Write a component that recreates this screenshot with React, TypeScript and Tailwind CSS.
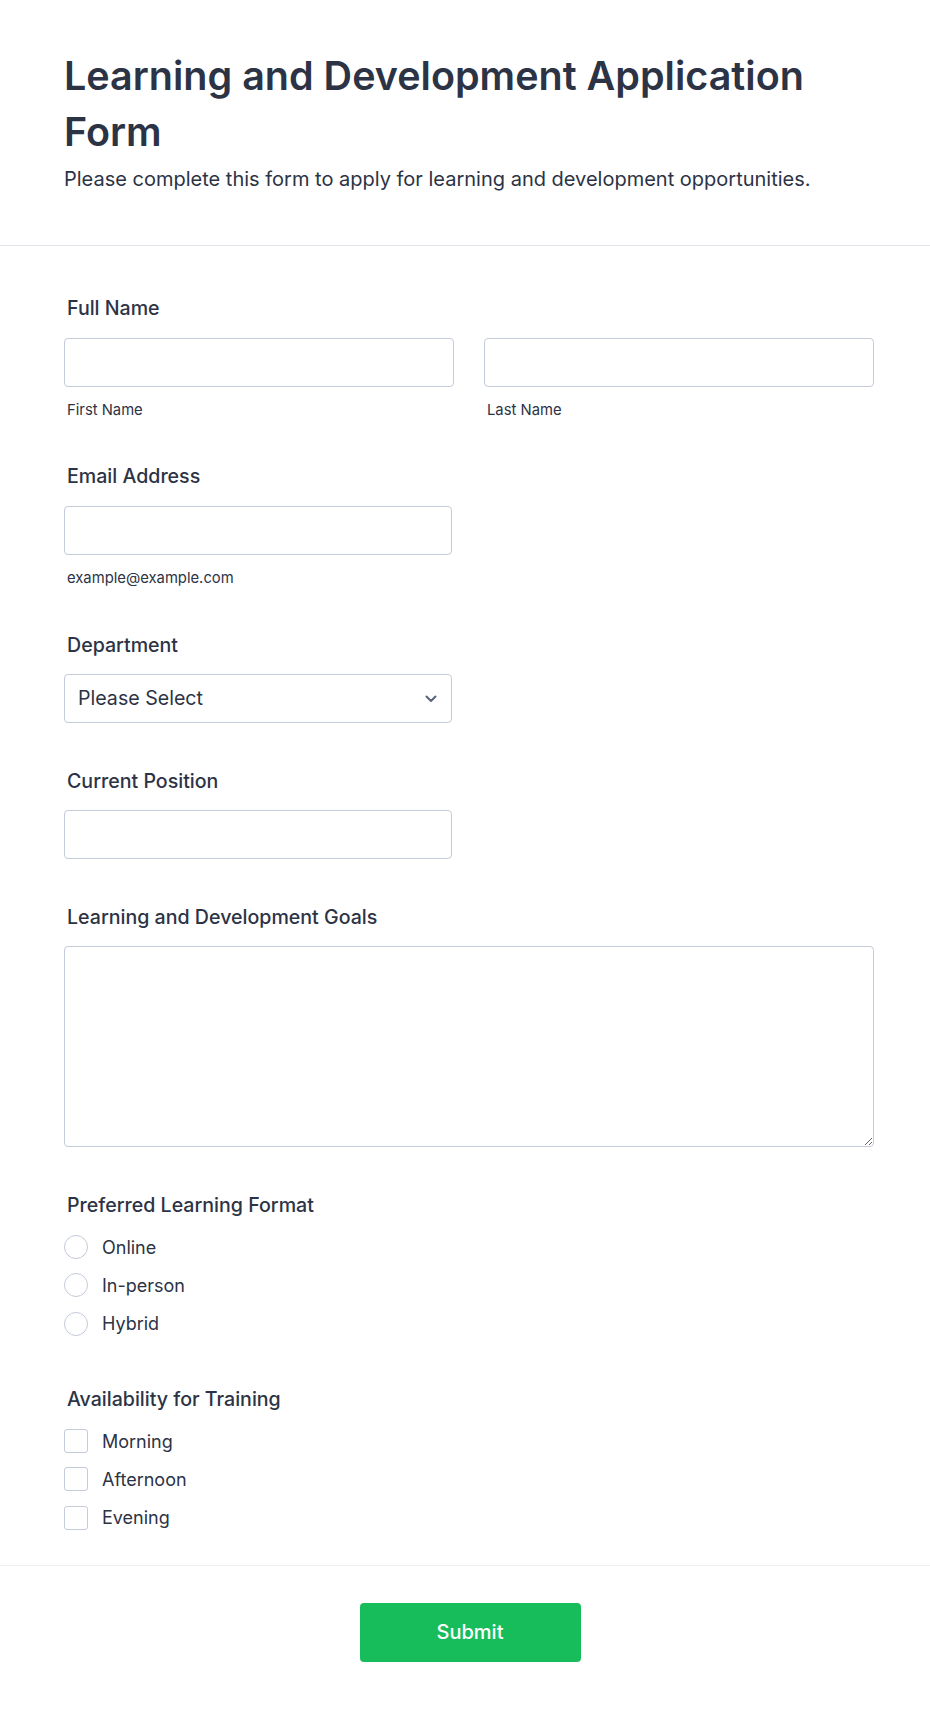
import React from 'react';

const labelCls = 'block pl-[3px] text-[19.6px] leading-[27px] font-medium text-[#2c3345]';
const inputCls =
  'block w-full h-[49px] rounded-[4px] border border-[#c3cad8] bg-white px-3 text-[18px] text-[#2c3345] outline-none';
const subCls = 'block pl-[3px] text-[14.8px] leading-[21px] text-[#2c3345]';

function Chevron() {
  return (
    <svg width="12" height="8" viewBox="0 0 12 8" fill="none" className="shrink-0">
      <path d="M1.5 1.5L6 6L10.5 1.5" stroke="#57647e" strokeWidth="2" strokeLinecap="round" strokeLinejoin="round" />
    </svg>
  );
}

function Radio({ label }: { label: string }) {
  return (
    <label className="flex items-center h-[38.3px] gap-[14px]">
      <span className="w-[24px] h-[24px] rounded-full border-[1.5px] border-[#c3cad8] bg-white" />
      <span className="text-[18px] leading-[27px] text-[#2c3345]">{label}</span>
    </label>
  );
}

function Check({ label }: { label: string }) {
  return (
    <label className="flex items-center h-[38.3px] gap-[14px]">
      <span className="w-[24px] h-[24px] rounded-[3px] border-[1.5px] border-[#c3cad8] bg-white" />
      <span className="text-[18px] leading-[27px] text-[#2c3345]">{label}</span>
    </label>
  );
}

export default function App() {
  return (
    <div className="min-h-[1713px] bg-white" style={{ fontFamily: 'Inter, "Noto Sans", sans-serif' }}>
      <header className="px-[64px] pt-[48px] pb-[52px] border-b border-[#e0e3ea]">
        <h1 className="text-[39.5px] leading-[56px] font-semibold text-[#2c3345]">
          Learning and Development Application Form
        </h1>
        <p className="mt-[5px] text-[20px] leading-[28px] text-[#2c3345]">
          Please complete this form to apply for learning and development opportunities.
        </p>
      </header>

      <form className="px-[64px] pt-[49px] pb-[28px]" onSubmit={(e) => e.preventDefault()}>
        <div>
          <span className={labelCls}>Full Name</span>
          <div className="mt-[16px] grid grid-cols-2 gap-[30px] w-[810px]">
            <div>
              <input className={inputCls} />
              <span className={`${subCls} mt-[13px]`}>First Name</span>
            </div>
            <div>
              <input className={inputCls} />
              <span className={`${subCls} mt-[13px]`}>Last Name</span>
            </div>
          </div>
        </div>

        <div className="mt-[42px] w-[388px]">
          <span className={labelCls}>Email Address</span>
          <input className={`${inputCls} mt-[16px]`} />
          <span className={`${subCls} mt-[13px]`}>example@example.com</span>
        </div>

        <div className="mt-[43px] w-[388px]">
          <span className={labelCls}>Department</span>
          <div className="mt-[15px] h-[49px] rounded-[4px] border border-[#c3cad8] flex items-center justify-between pl-[13px] pr-[14px]">
            <span className="text-[19.6px] text-[#2c3345]">Please Select</span>
            <Chevron />
          </div>
        </div>

        <div className="mt-[45px] w-[388px]">
          <span className={labelCls}>Current Position</span>
          <input className={`${inputCls} mt-[15px]`} />
        </div>

        <div className="mt-[45px] w-[810px]">
          <span className={labelCls}>Learning and Development Goals</span>
          <textarea className="mt-[15px] block w-full h-[201px] rounded-[4px] border border-[#c3cad8] bg-white p-3 text-[18px] outline-none" />
        </div>

        <div className="mt-[45px]">
          <span className={labelCls}>Preferred Learning Format</span>
          <div className="mt-[9px]">
            <Radio label="Online" />
            <Radio label="In-person" />
            <Radio label="Hybrid" />
          </div>
        </div>

        <div className="mt-[43px]">
          <span className={labelCls}>Availability for Training</span>
          <div className="mt-[9px]">
            <Check label="Morning" />
            <Check label="Afternoon" />
            <Check label="Evening" />
          </div>
        </div>
      </form>

      <div className="border-t border-[#eceef4] pt-[37px] pb-[50px] flex justify-center">
        <button className="ml-[10px] w-[221px] h-[59px] rounded-[4px] bg-[#18bd5b] text-white text-[20px] font-medium">
          Submit
        </button>
      </div>
    </div>
  );
}
